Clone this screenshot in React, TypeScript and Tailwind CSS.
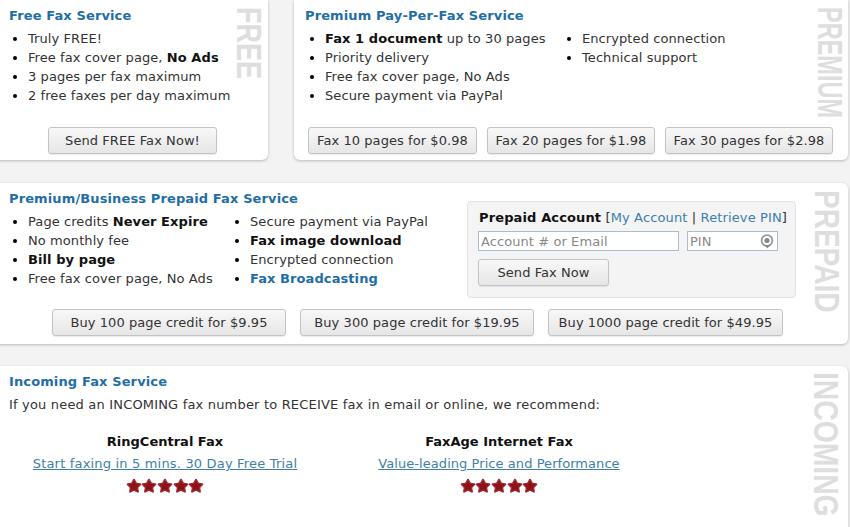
import type { ReactNode } from "react";
import { Star } from "lucide-react";

const btn =
  "h-[27px] rounded-[3px] border border-[#c4c4c4] bg-gradient-to-b from-[#f8f8f8] to-[#e6e6e6] text-[13px] leading-none tracking-[0.07px] text-[#333] shadow-[0_1px_1px_rgba(0,0,0,0.08)] whitespace-nowrap";

const Side = ({ children, className }: { children: string; className: string }) => (
  <div
    className={`absolute font-['Liberation_Sans',sans-serif] font-bold leading-none text-[#dedede] [writing-mode:vertical-rl] origin-center ${className}`}
  >
    {children}
  </div>
);

const Heading = ({ children }: { children: ReactNode }) => (
  <h2 className="text-[13px] leading-[19px] font-bold tracking-[0.12px] text-[#1f6ea6]">{children}</h2>
);

const Bullets = ({ items, className = "" }: { items: ReactNode[]; className?: string }) => (
  <ul className={`list-disc pl-[19px] text-[13px] leading-[19px] tracking-[0.08px] text-[#333] marker:text-black ${className}`}>
    {items.map((item, i) => (
      <li key={i}>{item}</li>
    ))}
  </ul>
);

const Stars = () => (
  <div className="mt-[5px] flex justify-center">
    {[0, 1, 2, 3, 4].map((i) => (
      <Star key={i} size={16} strokeWidth={2} className="-mx-[0.2px] fill-[#8f1218] text-[#a02a30]" />
    ))}
  </div>
);

const Vendor = ({ name, link, className, linkClass }: { name: string; link: string; className: string; linkClass: string }) => (
  <div className={`text-center ${className}`}>
    <div className="text-[13px] leading-[19px] font-bold text-[#111]">{name}</div>
    <a href="#" className={`mt-[3px] block text-[13px] leading-[19px] text-[#3f80a8] underline ${linkClass}`}>
      {link}
    </a>
    <Stars />
  </div>
);

export default function App() {
  return (
    <div className="h-[527px] w-[850px] overflow-hidden bg-[#f3f3f3] font-['DejaVu_Sans',sans-serif]">
      <div className="flex h-[161px] items-stretch">
        <section className="relative ml-[-4px] h-[160px] w-[272px] rounded-br-[6px] bg-white pl-[13px] pt-[6px] shadow-[0_1px_3px_rgba(0,0,0,0.25)]">
          <Heading>Free Fax Service</Heading>
          <Bullets
            className="mt-[4px]"
            items={[
              "Truly FREE!",
              <>
                Free fax cover page, <b className="text-[#111]">No Ads</b>
              </>,
              "3 pages per fax maximum",
              "2 free faxes per day maximum",
            ]}
          />
          <div className="mt-[22px] flex pl-[39px]">
            <button className={`${btn} w-[169px]`}>Send FREE Fax Now!</button>
          </div>
          <Side className="right-[6px] top-[7px] text-[27px] scale-x-[1.3]">FREE</Side>
        </section>

        <section className="relative ml-[26px] h-[160px] w-[554px] rounded-b-[6px] bg-white pl-[11px] pt-[6px] shadow-[0_1px_3px_rgba(0,0,0,0.25)]">
          <Heading>Premium Pay-Per-Fax Service</Heading>
          <div className="mt-[4px] flex">
            <Bullets
              className="w-[258px] pl-[20px]"
              items={[
                <>
                  <b className="text-[#111]">Fax 1 document</b> up to 30 pages
                </>,
                "Priority delivery",
                "Free fax cover page, No Ads",
                "Secure payment via PayPal",
              ]}
            />
            <Bullets items={["Encrypted connection", "Technical support"]} />
          </div>
          <div className="mt-[22px] flex gap-[10px] pl-[3px]">
            <button className={`${btn} w-[169px]`}>Fax 10 pages for $0.98</button>
            <button className={`${btn} w-[168px]`}>Fax 20 pages for $1.98</button>
            <button className={`${btn} w-[168px]`}>Fax 30 pages for $2.98</button>
          </div>
          <Side className="right-[8px] top-[7px] text-[23.5px] scale-x-[1.5]">PREMIUM</Side>
        </section>
      </div>

      <section className="relative ml-[-4px] mt-[22px] h-[161px] w-[852px] rounded-r-[6px] bg-white pl-[13px] pt-[6px] shadow-[0_1px_3px_rgba(0,0,0,0.25)]">
        <Heading>Premium/Business Prepaid Fax Service</Heading>
        <div className="mt-[4px] flex items-start">
          <Bullets
            className="w-[222px]"
            items={[
              <>
                Page credits <b className="text-[#111]">Never Expire</b>
              </>,
              "No monthly fee",
              <b className="text-[#111]">Bill by page</b>,
              "Free fax cover page, No Ads",
            ]}
          />
          <Bullets
            className="w-[236px]"
            items={[
              "Secure payment via PayPal",
              <b className="text-[#111]">Fax image download</b>,
              "Encrypted connection",
              <b className="text-[#1f6ea6]">Fax Broadcasting</b>,
            ]}
          />
          <div className="-mt-[11px] h-[97px] w-[329px] rounded-[4px] border border-[#e2e2e2] bg-[#f4f4f4] pl-[10px] pt-[6px]">
            <div className="whitespace-nowrap pl-[1px] text-[13px] leading-[19px] tracking-[0.13px] text-[#333]">
              <b className="text-[#111]">Prepaid Account</b> [<a href="#" className="text-[#3b7eb0]">My Account</a> |{" "}
              <a href="#" className="text-[#3b7eb0]">Retrieve PIN</a>]
            </div>
            <div className="mt-[4px] flex items-start gap-[8px]">
              <input
                placeholder="Account # or Email"
                className="block h-[20px] w-[201px] border border-[#a9bdcf] bg-white px-[2px] text-[13px] tracking-[0.08px] placeholder:text-[#888] outline-none"
              />
              <div className="relative">
                <input
                  placeholder="PIN"
                  className="block h-[20px] w-[91px] border border-[#a9bdcf] bg-white px-[2px] text-[13px] placeholder:text-[#888] outline-none"
                />
                <svg viewBox="0 0 16 16" className="absolute right-[3px] top-[2px] h-[16px] w-[16px]">
                  <circle cx="8" cy="7.5" r="5.4" fill="none" stroke="#999" strokeWidth="1.8" />
                  <circle cx="8" cy="7.5" r="2.6" fill="#888" />
                  <path d="M5.5 12 L8.5 15.5 L11 12 Z" fill="#888" />
                </svg>
              </div>
            </div>
            <button className={`${btn} mt-[8px] w-[131px]`}>Send Fax Now</button>
          </div>
        </div>
        <div className="mt-[11px] flex gap-[14px] pl-[43px]">
          <button className={`${btn} w-[234px]`}>Buy 100 page credit for $9.95</button>
          <button className={`${btn} w-[234px]`}>Buy 300 page credit for $19.95</button>
          <button className={`${btn} w-[235px]`}>Buy 1000 page credit for $49.95</button>
        </div>
        <Side className="right-[8px] top-[7px] text-[28px] scale-x-[1.25]">PREPAID</Side>
      </section>

      <section className="relative ml-[-4px] mt-[22px] h-[170px] w-[852px] rounded-tr-[6px] bg-white pl-[13px] pt-[6px] shadow-[0_1px_3px_rgba(0,0,0,0.25)]">
        <Heading>Incoming Fax Service</Heading>
        <p className="mt-[4px] text-[13px] leading-[19px] tracking-[0.18px] text-[#333]">
          If you need an INCOMING fax number to RECEIVE fax in email or online, we recommend:
        </p>
        <div className="mt-[18px] flex">
          <Vendor
            className="ml-[20px] w-[272px]"
            linkClass="tracking-[0.18px]"
            name="RingCentral Fax"
            link="Start faxing in 5 mins. 30 Day Free Trial"
          />
          <Vendor
            className="ml-[75px] w-[246px]"
            linkClass="tracking-[0.06px]"
            name="FaxAge Internet Fax"
            link="Value-leading Price and Performance"
          />
        </div>
        <Side className="right-[8px] top-[6px] text-[28.3px] scale-x-[1.25]">INCOMING</Side>
      </section>
    </div>
  );
}
